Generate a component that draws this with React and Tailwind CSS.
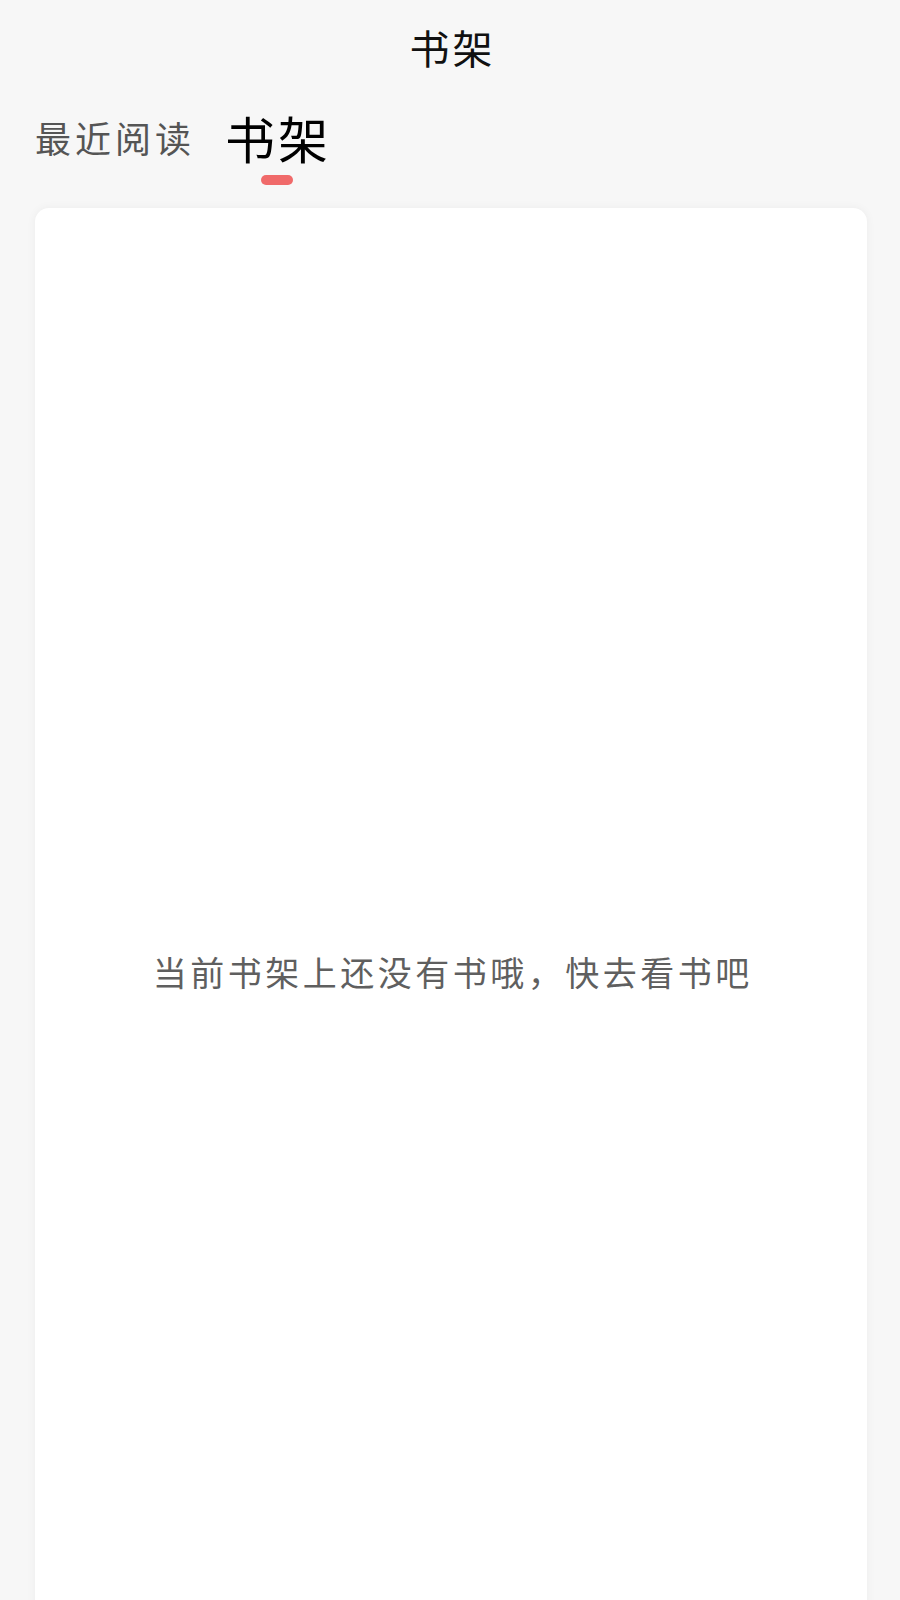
export default function App() {
  return (
    <div
      className="min-h-screen bg-[#f7f7f7] pl-[35px] pr-[33px]"
      style={{ fontFamily: '"Noto Sans CJK SC", "Noto Sans", sans-serif' }}
    >
      <header className="pt-[27px] text-center">
        <h1 className="pl-[3px] text-[40px] leading-none tracking-[3px] text-[#111]">书架</h1>
      </header>

      <nav className="mt-[45px] flex items-start gap-[27px]">
        <button className="mt-[7px] text-[36px] leading-none tracking-[4px] text-[#555]">
          最近阅读
        </button>
        <button className="flex flex-col items-center">
          <span className="pl-[3px] text-[50px] leading-none tracking-[3px] text-black">书架</span>
          <span className="mt-[13px] h-[10px] w-[32px] rounded-full bg-[#f06a6a]" />
        </button>
      </nav>

      <section className="mt-[23px] flex h-[1528px] items-center justify-center rounded-[14px] bg-white shadow-[0_0_10px_rgba(0,0,0,0.05)]">
        <p className="pl-[3.5px] text-[34px] leading-none tracking-[3.5px] text-[#5f5f5f]">
          当前书架上还没有书哦，快去看书吧
        </p>
      </section>
    </div>
  )
}
